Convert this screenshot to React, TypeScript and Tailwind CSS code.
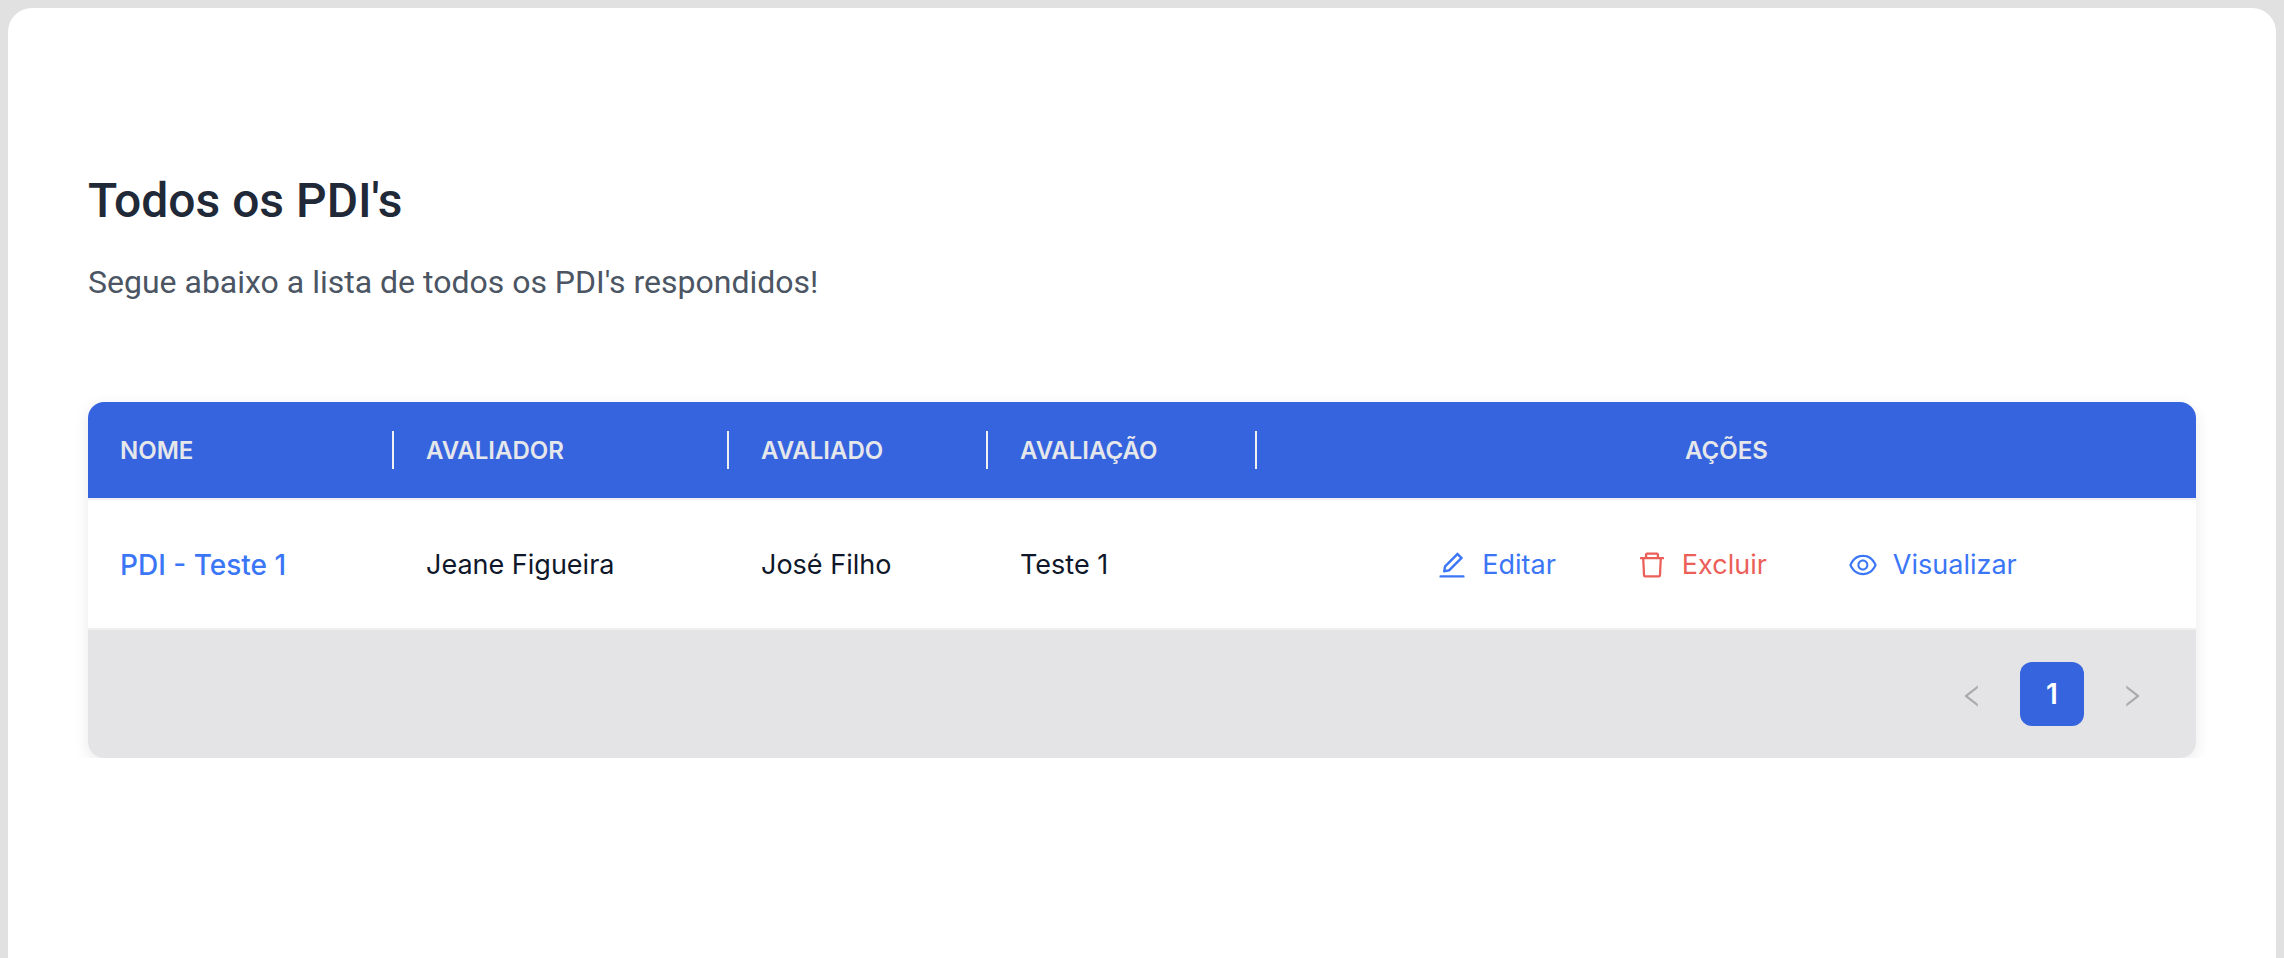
import type { ReactNode } from "react";
import {
  AiOutlineDelete,
  AiOutlineEdit,
  AiOutlineEye,
  AiOutlineLeft,
  AiOutlineRight,
} from "react-icons/ai";

type Pdi = {
  id: number;
  nome: string;
  avaliador: string;
  avaliado: string;
  avaliacao: string;
};

const pdis: Pdi[] = [
  {
    id: 1,
    nome: "PDI - Teste 1",
    avaliador: "Jeane Figueira",
    avaliado: "José Filho",
    avaliacao: "Teste 1",
  },
];

const columns = [
  { title: "NOME", width: "w-[306px]" },
  { title: "AVALIADOR", width: "w-[335px]" },
  { title: "AVALIADO", width: "w-[259px]" },
  { title: "AVALIAÇÃO", width: "w-[269px]" },
];

const cell = "border-y-2 border-[#f0f0f0] px-8 pt-0.5 pb-0";

function Action({
  icon,
  label,
  color,
}: {
  icon: ReactNode;
  label: string;
  color: string;
}) {
  return (
    <button type="button" className={`flex items-center gap-[14px] ${color}`}>
      <span className="text-[32px]">{icon}</span>
      {label}
    </button>
  );
}

function PdiTable() {
  return (
    <table className="w-full table-fixed border-separate border-spacing-0 text-left text-[27px] leading-9 text-[#0f172a]">
      <thead className="bg-[#3664de] text-2xl text-[#e5e7eb]">
        <tr className="h-24">
          {columns.map((column) => (
            <th key={column.title} scope="col" className={`p-0 font-semibold ${column.width}`}>
              <div className="flex h-[38px] items-center border-r-2 border-[#f0f0f0] pt-0.5 pl-8">
                {column.title}
              </div>
            </th>
          ))}
          <th scope="col" className="p-0 pt-0.5 text-center font-semibold">
            AÇÕES
          </th>
        </tr>
      </thead>
      <tbody>
        {pdis.map((pdi) => (
          <tr key={pdi.id} className="h-[132px]">
            <td className={`${cell} text-[28px] font-medium text-[#3b76f6]`}>
              <a href="#pdi">{pdi.nome}</a>
            </td>
            <td className={cell}>{pdi.avaliador}</td>
            <td className={cell}>{pdi.avaliado}</td>
            <td className={cell}>{pdi.avaliacao}</td>
            <td className={cell}>
              <div className="flex items-center justify-center gap-20">
                <Action icon={<AiOutlineEdit />} label="Editar" color="text-[#3b76f6]" />
                <Action icon={<AiOutlineDelete />} label="Excluir" color="text-[#ec5f59]" />
                <Action icon={<AiOutlineEye />} label="Visualizar" color="text-[#3b76f6]" />
              </div>
            </td>
          </tr>
        ))}
      </tbody>
    </table>
  );
}

function Pagination() {
  return (
    <nav
      aria-label="Paginação"
      className="flex h-32 items-center justify-end gap-4 bg-[#e4e4e6] px-8 text-[28px]"
    >
      <button
        type="button"
        disabled
        aria-label="Página anterior"
        className="flex size-16 items-center justify-center pt-1 text-[#aaaaac]"
      >
        <AiOutlineLeft />
      </button>
      <button
        type="button"
        aria-current="page"
        className="flex size-16 items-center justify-center rounded-xl bg-[#3664de] font-semibold text-white"
      >
        1
      </button>
      <button
        type="button"
        disabled
        aria-label="Próxima página"
        className="flex size-16 items-center justify-center pt-1 text-[#aaaaac]"
      >
        <AiOutlineRight />
      </button>
    </nav>
  );
}

export default function App() {
  return (
    <div className="flex min-h-screen flex-col bg-[#e1e1e1] px-2 pt-2">
      <main className="grow rounded-t-3xl bg-white pt-40 font-['Inter',sans-serif]">
        <header className="flex flex-col gap-[30px] px-20 font-['Roboto',sans-serif]">
          <h1 className="text-5xl leading-[66px] font-medium text-[#1f2937]">Todos os PDI's</h1>
          <p className="text-[32px] leading-[36px] text-[#4b5563]">
            Segue abaixo a lista de todos os PDI's respondidos!
          </p>
        </header>
        <section className="overflow-hidden px-20 pt-[102px]">
          <div className="rounded-2xl shadow-[0_4px_16px_rgba(0,0,0,0.09)]">
            <div className="overflow-hidden rounded-2xl">
              <PdiTable />
              <Pagination />
            </div>
          </div>
        </section>
      </main>
    </div>
  );
}
